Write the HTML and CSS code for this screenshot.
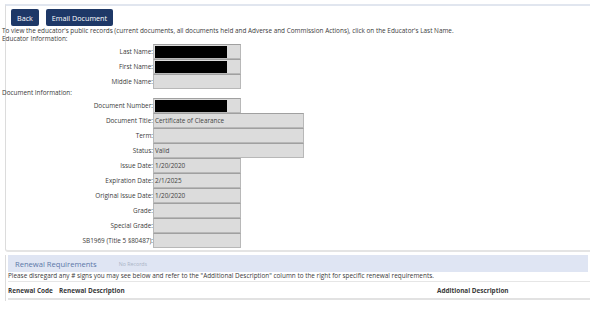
FILE: index.html
```html
<!DOCTYPE html>
<html>
<head>
<meta charset="utf-8">
<link rel="stylesheet" href="styles.css">
</head>
<body>
<div class="panel top-panel">
  <div class="buttons">
    <span class="btn">Back</span>
    <span class="btn">Email Document</span>
  </div>
  <div class="intro">To view the educator's public records (current documents, all documents held and Adverse and Commission Actions), click on the Educator's Last Name.</div>
  <div class="section">Educator Information:</div>
  <div class="form">
    <div class="label">Last Name:</div><div class="val narrow"><span class="redact"></span></div>
    <div class="label">First Name:</div><div class="val narrow"><span class="redact"></span></div>
    <div class="label">Middle Name:</div><div class="val narrow"></div>
  </div>
  <div class="section">Document Information:</div>
  <div class="form">
    <div class="label">Document Number:</div><div class="val narrow"><span class="redact"></span></div>
    <div class="label">Document Title:</div><div class="val wide">Certificate of Clearance</div>
    <div class="label">Term:</div><div class="val wide"></div>
    <div class="label">Status:</div><div class="val wide">Valid</div>
    <div class="label">Issue Date:</div><div class="val narrow">1/20/2020</div>
    <div class="label">Expiration Date:</div><div class="val narrow">2/1/2025</div>
    <div class="label">Original Issue Date:</div><div class="val narrow">1/20/2020</div>
    <div class="label">Grade:</div><div class="val narrow"></div>
    <div class="label">Special Grade:</div><div class="val narrow"></div>
    <div class="label">SB1969 (Title 5 §80487):</div><div class="val narrow"></div>
  </div>
</div>
<div class="panel renew-panel">
  <div class="renew-head">
    <span class="renew-title">Renewal Requirements</span>
    <span class="no-records">No Records</span>
  </div>
  <div class="note">Please disregard any # signs you may see below and refer to the "Additional Description" column to the right for specific renewal requirements.</div>
  <div class="table-head">
    <span class="col-code">Renewal Code</span>
    <span class="col-desc">Renewal Description</span>
    <span class="col-add">Additional Description</span>
  </div>
</div>
</body>
</html>
```

FILE: styles.css
```css
html, body {
  margin: 0;
  padding: 0;
  background: #ffffff;
}
body {
  font-family: "Open Sans", "Liberation Sans", sans-serif;
  font-size: 6.4px;
  color: #3a3a3a;
  width: 600px;
  height: 313px;
  overflow: hidden;
}
.panel {
  margin-left: 5px;
  width: 585px;
  box-sizing: border-box;
}
.top-panel {
  margin-top: 4px;
  border-top: 2px solid #e1e6ef;
  border-left: 1px solid #dcdcdc;
  border-bottom: 2px solid #e4e4e4;
  border-bottom-left-radius: 3px;
  padding-bottom: 2px;
}
.buttons {
  display: flex;
  gap: 7px;
  padding: 3px 0 0 5px;
  height: 17px;
}
.btn {
  display: flex;
  align-items: center;
  justify-content: center;
  background: #1e3867;
  color: #ffffff;
  font-size: 7.2px;
  border-radius: 2px;
  height: 17px;
  padding: 0 6px;
}
.intro {
  margin-top: 1px;
  margin-left: -4px;
  line-height: 8px;
}
.section {
  margin-left: -4px;
  line-height: 8px;
}
.form {
  display: grid;
  grid-template-columns: 147px auto;
  grid-auto-rows: 15px;
  justify-items: start;
  margin-top: 1px;
}
.label {
  justify-self: end;
  align-self: center;
}
.val {
  box-sizing: border-box;
  height: 15px;
  background: #dcdcdc;
  border: 1px solid #b8b8b8;
  border-top-color: #a0a0a0;
  display: flex;
  align-items: center;
  padding-left: 1px;
  color: #444444;
}
.narrow { width: 88px; }
.wide { width: 151px; }
.redact {
  display: block;
  width: 72px;
  height: 12px;
  background: #000000;
}
.renew-panel {
  margin-top: 3px;
  border-left: 1px solid #dcdcdc;
  padding-left: 2px;
  height: 46px;
}
.renew-head {
  display: flex;
  align-items: center;
  background: #dfe5f3;
  height: 17px;
  padding-left: 7px;
  margin-right: 2px;
}
.renew-title {
  font-size: 7.6px;
  color: #5b77a8;
}
.no-records {
  margin-left: 22px;
  font-size: 5.3px;
  color: #a9b3c6;
}
.note {
  height: 9px;
  line-height: 8px;
  border-bottom: 1px solid #e6e6e6;
}
.table-head {
  display: flex;
  align-items: center;
  height: 16px;
  font-weight: bold;
  border-bottom: 2px solid #e2e2e2;
}
.col-code { width: 51px; }
.col-desc { width: 378px; }
```
